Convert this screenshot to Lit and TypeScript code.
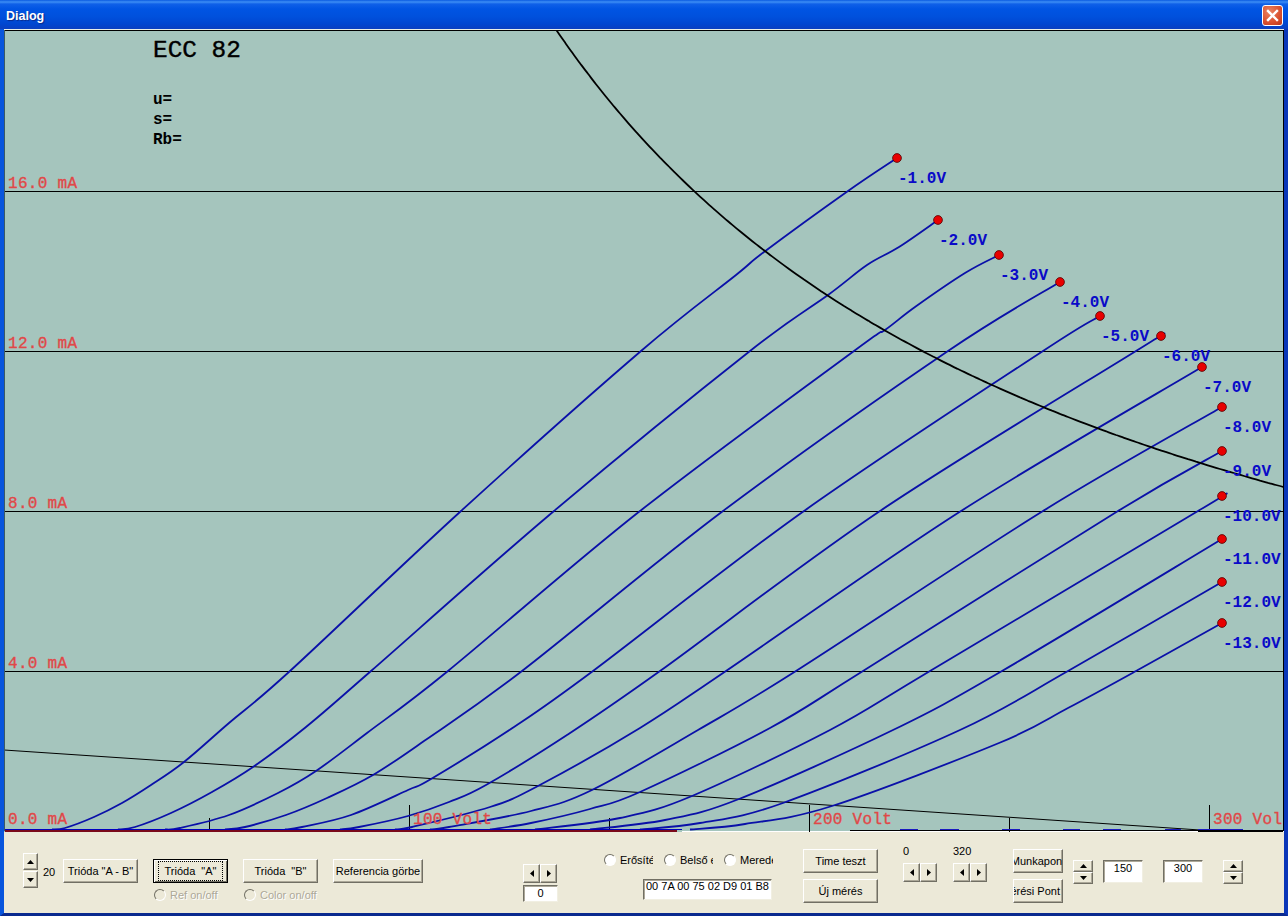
import { LitElement, html, css, svg } from 'lit';
import { customElement } from 'lit/decorators.js';

type Pt = [number, number];

// anode curves in page pixels, read off the plot
const CURVES: Pt[][] = [
  [[52, 829.5], [65, 828], [94, 817], [122, 803], [151, 785], [184, 762], [229, 723], [290, 671], [461, 511], [641, 351], [736, 275], [764, 252], [848, 191], [897, 158]],
  [[118, 829.5], [135, 827], [171, 813], [212, 792], [253, 767], [306, 727], [371, 671], [554, 511], [750, 351], [828, 295], [867, 265], [899, 247], [938, 220]],
  [[165, 829.5], [180, 828], [229, 815], [278, 793], [316, 771], [367, 733], [448, 671], [640, 511], [854, 351], [885, 330], [915, 307], [965, 273], [999, 255]],
  [[225, 829.5], [245, 827], [286, 815], [327, 798], [373, 775], [424, 741], [522, 671], [723, 511], [948, 351], [1060, 282]],
  [[285, 829.5], [302, 827], [351, 815], [408, 790], [431, 779], [514, 727], [593, 671], [804, 511], [1043, 351], [1100, 316]],
  [[340, 829.5], [359, 827], [408, 816], [449, 802], [486, 785], [567, 735], [660, 671], [880, 511], [1136, 351], [1161, 336]],
  [[395, 829.5], [412, 827], [490, 807], [538, 786], [640, 728], [726, 671], [961, 511], [1202, 367]],
  [[430, 829.5], [449, 827], [531, 811], [592, 790], [698, 730], [796, 671], [1043, 511], [1222, 407]],
  [[490, 829.5], [531, 823], [590, 809], [640, 792], [770, 728], [863, 671], [1118, 511], [1222, 451]],
  [[535, 829.5], [620, 818], [692, 796], [830, 730], [930, 671], [1198, 511], [1222, 496]],
  [[590, 829.5], [665, 820], [739, 799], [893, 730], [1002, 671], [1222, 539]],
  [[640, 829.5], [700, 823], [783, 803], [960, 730], [1068, 671], [1222, 582]],
  [[690, 829.5], [745, 824], [832, 806], [999, 743], [1068, 708], [1136, 671], [1222, 623]],
];

const LABELS: Array<[string, number, number]> = [
  ['-1.0V', 898, 183], ['-2.0V', 939, 245], ['-3.0V', 1000, 280], ['-4.0V', 1061, 307],
  ['-5.0V', 1101, 341], ['-6.0V', 1162, 361], ['-7.0V', 1203, 392], ['-8.0V', 1223, 432],
  ['-9.0V', 1223, 476], ['-10.0V', 1223, 521], ['-11.0V', 1223, 564], ['-12.0V', 1223, 607],
  ['-13.0V', 1223, 648],
];

// max dissipation: y from I*V = const on the plot's scales
const POWER: Pt[] = [];
for (let x = 556; x <= 1284; x += 8) {
  POWER.push([x, 831 - (40 * 2740) / ((x - 9) / 4)]);
}

const DASHES: Pt[] = [[900, 918], [940, 959], [1002, 1020], [1063, 1080], [1103, 1121], [1165, 1181], [1198, 1243]];

function smooth(p: Pt[]): string {
  let d = `M${p[0][0]} ${p[0][1]}`;
  for (let i = 0; i < p.length - 1; i++) {
    const a = p[Math.max(i - 1, 0)];
    const b = p[i];
    const c = p[i + 1];
    const e = p[Math.min(i + 2, p.length - 1)];
    const c1x = b[0] + (c[0] - a[0]) / 6;
    const c1y = b[1] + (c[1] - a[1]) / 6;
    const c2x = c[0] - (e[0] - b[0]) / 6;
    const c2y = c[1] - (e[1] - b[1]) / 6;
    d += `C${c1x.toFixed(1)} ${c1y.toFixed(1)} ${c2x.toFixed(1)} ${c2y.toFixed(1)} ${c[0]} ${c[1].toFixed(1)}`;
  }
  return d;
}

const arrow = (dir: 'up' | 'down' | 'left' | 'right') => {
  const shape = {
    up: '0,4 3.5,0 7,4',
    down: '0,0 7,0 3.5,4',
    left: '4,0 4,7 0,3.5',
    right: '0,0 4,3.5 0,7',
  }[dir];
  const vertical = dir === 'up' || dir === 'down';
  return html`<svg width=${vertical ? 7 : 4} height=${vertical ? 4 : 7}><polygon points=${shape} fill="#000"></polygon></svg>`;
};

@customElement('app-root')
export class AppRoot extends LitElement {
  static styles = css`
    :host {
      display: block;
      width: 1288px;
      height: 916px;
      overflow: hidden;
      font-family: 'Liberation Sans', Arial, sans-serif;
      font-size: 11px;
      color: #000;
    }
    .titlebar {
      height: 29px;
      display: flex;
      align-items: center;
      justify-content: space-between;
      padding: 2px 5px 0 6px;
      box-sizing: border-box;
      background: linear-gradient(180deg, #0a5ae0 0, #3d8ef5 2px, #0f60e8 4px, #0054e3 9px, #0050dc 17px, #0046d0 24px, #0a3fc0 29px);
    }
    .title {
      color: #fff;
      font-size: 12.5px;
      font-weight: bold;
      text-shadow: 1px 1px 1px #0a2a8a;
    }
    .close {
      width: 21px;
      height: 21px;
      box-sizing: border-box;
      border: 1px solid #fff;
      border-radius: 3px;
      background: radial-gradient(circle at 35% 30%, #ea8463, #d9502e 60%, #b8341a);
      display: flex;
      align-items: center;
      justify-content: center;
    }
    .body {
      border-left: 4px solid #0855dd;
      border-right: 4px solid #0a36b8;
      border-bottom: 3px solid #0a2a8f;
      background: #ece9d8;
    }
    .plot {
      display: block;
      width: 1280px;
      height: 803px;
    }
    .panel {
      height: 81px;
      padding-left: 19px;
      display: flex;
      align-items: flex-start;
      box-sizing: border-box;
      overflow: hidden;
    }
    button {
      display: flex;
      align-items: center;
      justify-content: center;
      margin: 0;
      padding: 0;
      box-sizing: border-box;
      background: #ece9d8;
      border: 1px solid;
      border-color: #fff #716f64 #716f64 #fff;
      box-shadow: inset -1px -1px 0 #aca899;
      color: #000;
      font: inherit;
      white-space: pre;
      overflow: hidden;
    }
    .col {
      display: flex;
      flex-direction: column;
    }
    .btn {
      height: 24px;
      flex: none;
    }
    .w75 { width: 75px; }
    .w90 { width: 90px; }
    .w50 { width: 50px; }
    .to-right {
      justify-content: flex-end;
      padding-right: 2px;
    }
    .default {
      border: 1px solid #000;
      box-shadow: inset 1px 1px 0 #fff, inset -1px -1px 0 #716f64;
    }
    .default span {
      padding: 3px 0;
      border: 1px dotted #000;
      width: 65px;
      box-sizing: border-box;
      text-align: center;
    }
    .stack {
      display: flex;
      flex-direction: column;
    }
    .spin-a button {
      width: 15px;
      height: 17px;
    }
    .spin-a button + button {
      margin-top: 1px;
    }
    .spin-b button {
      width: 20px;
      height: 12px;
    }
    .pair {
      display: flex;
    }
    .pair button {
      width: 17px;
      height: 19px;
    }
    .edit {
      box-sizing: border-box;
      background: #fff;
      border: 1px solid;
      border-color: #716f64 #f1efe2 #f1efe2 #716f64;
      box-shadow: inset 1px 1px 0 #aca899;
      white-space: nowrap;
      overflow: hidden;
    }
    .radio {
      display: flex;
      align-items: center;
      height: 13px;
      white-space: nowrap;
      overflow: hidden;
    }
    .radio i {
      flex: none;
      width: 12px;
      height: 12px;
      box-sizing: border-box;
      border-radius: 50%;
      border: 1px solid;
      border-color: #716f64 #fff #fff #716f64;
      background: #fff;
      margin-right: 4px;
    }
    .radio.off {
      color: #aca899;
      text-shadow: 1px 1px 0 #fff;
    }
    .radio.off i {
      background: #ece9d8;
    }
    .radio-row {
      display: flex;
      gap: 11px;
    }
    .radio-row .radio { width: 49px; }

    .g-spin { margin-top: 21px; }
    .g-count { margin: 34px 0 0 5px; width: 20px; }
    .g-btn { margin: 27px 0 0 15px; }
    .g-first { margin: 27px 0 0 0; }
    .g-under { margin-top: 5px; margin-left: 1px; }
    .g-pair0 { margin: 32px 0 0 100px; width: 35px; }
    .g-pair0 .edit { height: 17px; margin-top: 2px; text-align: center; line-height: 15px; }
    .g-radios { margin: 21px 0 0 46px; width: 169px; }
    .g-radios .edit { width: 129px; height: 21px; margin: 13px 0 0 39px; padding-left: 2px; }
    .g-time { margin: 17px 0 0 30px; gap: 6px; }
    .g-num { margin: 13px 0 0 25px; width: 34px; }
    .g-num + .g-num { margin-left: 16px; }
    .g-num span { height: 12px; line-height: 12px; margin-bottom: 6px; }
    .g-work { margin: 17px 0 0 26px; gap: 6px; }
    .g-spinb { margin: 28px 0 0 10px; }
    .g-spinc { margin: 28px 0 0 20px; }
    .g-val { margin: 28px 0 0 10px; width: 40px; height: 23px; text-align: center; padding-top: 1px; }
    .g-val2 { margin-left: 20px; }
  `;

  plot() {
    const grid = [191, 351, 511, 671];
    const mono = "'Liberation Mono', 'Courier New', monospace";
    return html`<svg class="plot" viewBox="4 29 1280 803" xmlns="http://www.w3.org/2000/svg">
      <defs><clipPath id="pc"><rect x="5" y="31" width="1278" height="801"></rect></clipPath></defs>
      <rect x="4" y="29" width="1280" height="803" fill="#a5c5bd"></rect>
      <rect x="4" y="29" width="1280" height="1" fill="#e8efe8"></rect>
      <rect x="4" y="30" width="1280" height="1" fill="#000"></rect>
      <rect x="4" y="30" width="1" height="801" fill="#3a5a66"></rect>
      <rect x="1283" y="30" width="1" height="802" fill="#000"></rect>
      <rect x="682" y="831" width="602" height="1" fill="#fff"></rect>
      <rect x="850" y="830" width="348" height="1" fill="#000"></rect>
      <rect x="1198" y="830" width="85" height="2" fill="#000"></rect>
      <g clip-path="url(#pc)">
        ${grid.map((y) => svg`<rect x="5" y=${y} width="1278" height="1" fill="#000"></rect>`)}
        ${[209, 609, 1009].map((x) => svg`<rect x=${x} y="818" width="1" height="14" fill="#000"></rect>`)}
        ${[409, 809, 1209].map((x) => svg`<rect x=${x} y="805" width="1" height="27" fill="#000"></rect>`)}
        <path d="M4 750L1200 830" fill="none" stroke="#000" stroke-width="1"></path>
        ${CURVES.map((c) => svg`<path d=${smooth(c)} fill="none" stroke="#0a10a8" stroke-width="1.8"></path>`)}
        <rect x="5" y="829" width="677" height="1" fill="#0000c0"></rect>
        <rect x="5" y="830" width="672" height="2" fill="#7a0a1a"></rect>
        ${DASHES.map(([a, b]) => svg`<rect x=${a} y="829" width=${b - a} height="1" fill="#1a1ac0"></rect>`)}
        <path d=${smooth(POWER)} fill="none" stroke="#000" stroke-width="1.8"></path>
        ${CURVES.map((c) => {
          const [x, y] = c[c.length - 1];
          return svg`<circle cx=${x} cy=${y} r="4.4" fill="#e80000" stroke="#500" stroke-width="0.8"></circle>`;
        })}
        <g font-family=${mono} font-size="16" letter-spacing="0.3" fill="#e04848" stroke="#e04848" stroke-width="0.35">
          <text x="8" y="188">16.0 mA</text>
          <text x="8" y="348">12.0 mA</text>
          <text x="8" y="508">8.0 mA</text>
          <text x="8" y="668">4.0 mA</text>
          <text x="8" y="824">0.0 mA</text>
          <text x="413" y="824">100 Volt</text>
          <text x="813" y="824">200 Volt</text>
          <text x="1213" y="824">300 Volt</text>
        </g>
        <g font-family=${mono} font-size="16" font-weight="bold" fill="#0a0ac8">
          ${LABELS.map(([t, x, y]) => svg`<text x=${x} y=${y}>${t}</text>`)}
        </g>
        <g font-family=${mono} fill="#000">
          <text x="153" y="57" font-size="24.4" stroke="#000" stroke-width="0.4">ECC 82</text>
          <g font-size="16" font-weight="bold">
            <text x="153" y="104">u=</text>
            <text x="153" y="124">s=</text>
            <text x="153" y="144">Rb=</text>
          </g>
        </g>
      </g>
    </svg>`;
  }

  render() {
    return html`
      <div class="titlebar">
        <span class="title">Dialog</span>
        <div class="close">
          <svg width="13" height="13" viewBox="0 0 13 13">
            <path d="M2 2L11 11M11 2L2 11" stroke="#fff" stroke-width="2.4" stroke-linecap="square" fill="none"></path>
          </svg>
        </div>
      </div>
      <div class="body">
        ${this.plot()}
        <div class="panel">
          <div class="stack spin-a g-spin">
            <button>${arrow('up')}</button>
            <button>${arrow('down')}</button>
          </div>
          <span class="g-count">20</span>
          <div class="col g-first"><button class="btn w75">Trióda "A - B"</button></div>
          <div class="col g-btn">
            <button class="btn w75 default"><span>Trióda  "A"</span></button>
            <div class="radio off g-under"><i></i>Ref on/off</div>
          </div>
          <div class="col g-btn">
            <button class="btn w75">Trióda  "B"</button>
            <div class="radio off g-under"><i></i>Color on/off</div>
          </div>
          <div class="col g-btn"><button class="btn w90">Referencia görbe</button></div>
          <div class="col g-pair0">
            <div class="pair"><button>${arrow('left')}</button><button>${arrow('right')}</button></div>
            <div class="edit">0</div>
          </div>
          <div class="col g-radios">
            <div class="radio-row">
              <div class="radio"><i></i>Erősíté</div>
              <div class="radio"><i></i>Belső e</div>
              <div class="radio"><i></i>Merede</div>
            </div>
            <div class="edit">00 7A 00 75 02 D9 01 B8</div>
          </div>
          <div class="col g-time">
            <button class="btn w75">Time teszt</button>
            <button class="btn w75">Új mérés</button>
          </div>
          <div class="col g-num">
            <span>0</span>
            <div class="pair"><button>${arrow('left')}</button><button>${arrow('right')}</button></div>
          </div>
          <div class="col g-num">
            <span>320</span>
            <div class="pair"><button>${arrow('left')}</button><button>${arrow('right')}</button></div>
          </div>
          <div class="col g-work">
            <button class="btn w50">Munkapont</button>
            <button class="btn w50 to-right">Mérési Pont</button>
          </div>
          <div class="stack spin-b g-spinb">
            <button>${arrow('up')}</button>
            <button>${arrow('down')}</button>
          </div>
          <div class="edit g-val">150</div>
          <div class="edit g-val g-val2">300</div>
          <div class="stack spin-b g-spinc">
            <button>${arrow('up')}</button>
            <button>${arrow('down')}</button>
          </div>
        </div>
      </div>
    `;
  }
}
